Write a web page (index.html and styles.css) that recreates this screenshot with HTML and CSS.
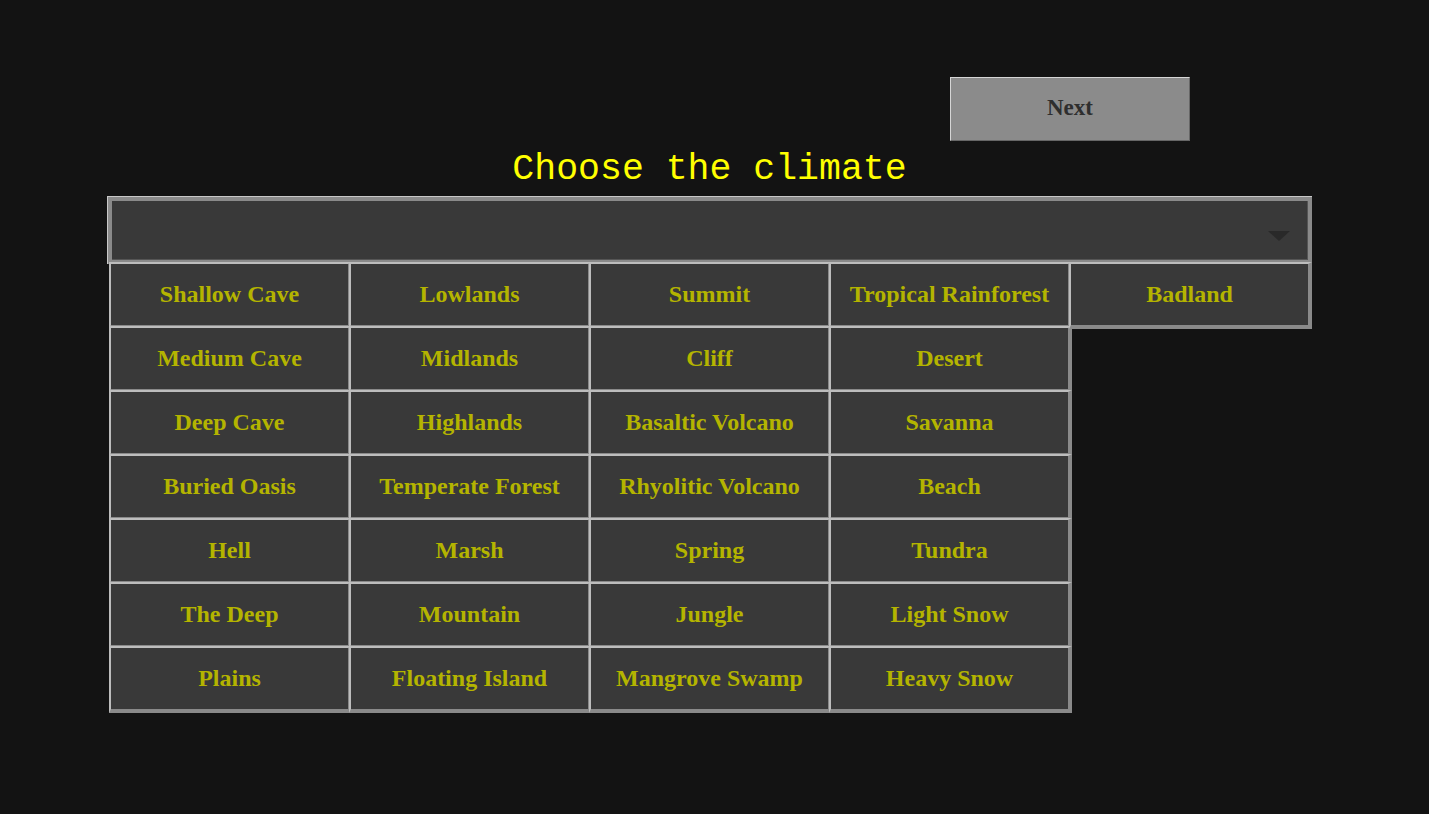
FILE: index.html
```html
<!DOCTYPE html>
<html>
<head>
<meta charset="utf-8">
<title>Choose the climate</title>
<link rel="stylesheet" href="styles.css">
</head>
<body>
<div class="app">
  <div class="topbar">
    <button class="next">Next</button>
  </div>
  <h1 class="title">Choose the climate</h1>
  <div class="select-frame">
    <div class="select"><span class="arrow"></span></div>
  </div>
  <div class="grid">
    <div class="cell">Shallow Cave</div>
    <div class="cell">Medium Cave</div>
    <div class="cell">Deep Cave</div>
    <div class="cell">Buried Oasis</div>
    <div class="cell">Hell</div>
    <div class="cell">The Deep</div>
    <div class="cell">Plains</div>
    <div class="cell">Lowlands</div>
    <div class="cell">Midlands</div>
    <div class="cell">Highlands</div>
    <div class="cell">Temperate Forest</div>
    <div class="cell">Marsh</div>
    <div class="cell">Mountain</div>
    <div class="cell">Floating Island</div>
    <div class="cell">Summit</div>
    <div class="cell">Cliff</div>
    <div class="cell">Basaltic Volcano</div>
    <div class="cell">Rhyolitic Volcano</div>
    <div class="cell">Spring</div>
    <div class="cell">Jungle</div>
    <div class="cell">Mangrove Swamp</div>
    <div class="cell">Tropical Rainforest</div>
    <div class="cell">Desert</div>
    <div class="cell">Savanna</div>
    <div class="cell">Beach</div>
    <div class="cell">Tundra</div>
    <div class="cell">Light Snow</div>
    <div class="cell">Heavy Snow</div>
    <div class="cell">Badland</div>
  </div>
</div>
</body>
</html>
```

FILE: styles.css
```css
html, body {
  margin: 0;
  padding: 0;
  background: #131313;
}

body {
  font-family: "Liberation Serif", "Times New Roman", serif;
}

.app {
  width: 1205px;
  margin-left: 107px;
  padding-top: 77px;
  padding-bottom: 60px;
}

.topbar {
  display: flex;
  justify-content: flex-end;
  padding-right: 122px;
}

.next {
  box-sizing: border-box;
  width: 240px;
  height: 64px;
  margin: 0;
  padding: 0 0 4px 0;
  background: #8b8b8b;
  border-style: solid;
  border-width: 1px;
  border-color: #d6d6d6 #666666 #666666 #d6d6d6;
  color: #2e2e2e;
  font-family: "Liberation Serif", "Times New Roman", serif;
  font-weight: bold;
  font-size: 23px;
  line-height: 1;
}

.title {
  margin: 0;
  height: 55px;
  padding-top: 2px;
  box-sizing: border-box;
  line-height: 53px;
  text-align: center;
  font-family: "Liberation Mono", "Courier New", monospace;
  font-weight: normal;
  font-size: 36.5px;
  color: #ffff00;
}

.select-frame {
  border-top: 1px solid #c8c8c8;
  border-left: 1px solid #c8c8c8;
}

.select {
  box-sizing: border-box;
  height: 67px;
  background: #393939;
  border: 4px solid #8a8a8a;
  box-shadow: inset -1px -1px 0 #555555;
  display: flex;
  justify-content: flex-end;
  align-items: flex-start;
  padding-top: 30px;
  padding-right: 18px;
}

.arrow {
  width: 0;
  height: 0;
  border-left: 11px solid transparent;
  border-right: 11px solid transparent;
  border-top: 10px solid #292929;
}

.grid {
  margin-top: -2px;
  margin-left: 2px;
  display: grid;
  grid-template-columns: repeat(5, 240px);
  grid-template-rows: repeat(7, 64px);
  grid-auto-flow: column;
  padding-bottom: 4px;
}

.cell {
  box-sizing: border-box;
  width: 243px;
  height: 67px;
  align-self: start;
  justify-self: start;
  background: #393939;
  border-style: solid;
  border-width: 2px 4px 4px 2px;
  border-color: #bdbdbd #8a8a8a #8a8a8a #bdbdbd;
  display: flex;
  align-items: center;
  justify-content: center;
  padding-bottom: 1px;
  color: #b4b400;
  font-weight: bold;
  font-size: 24px;
  white-space: nowrap;
}
```
